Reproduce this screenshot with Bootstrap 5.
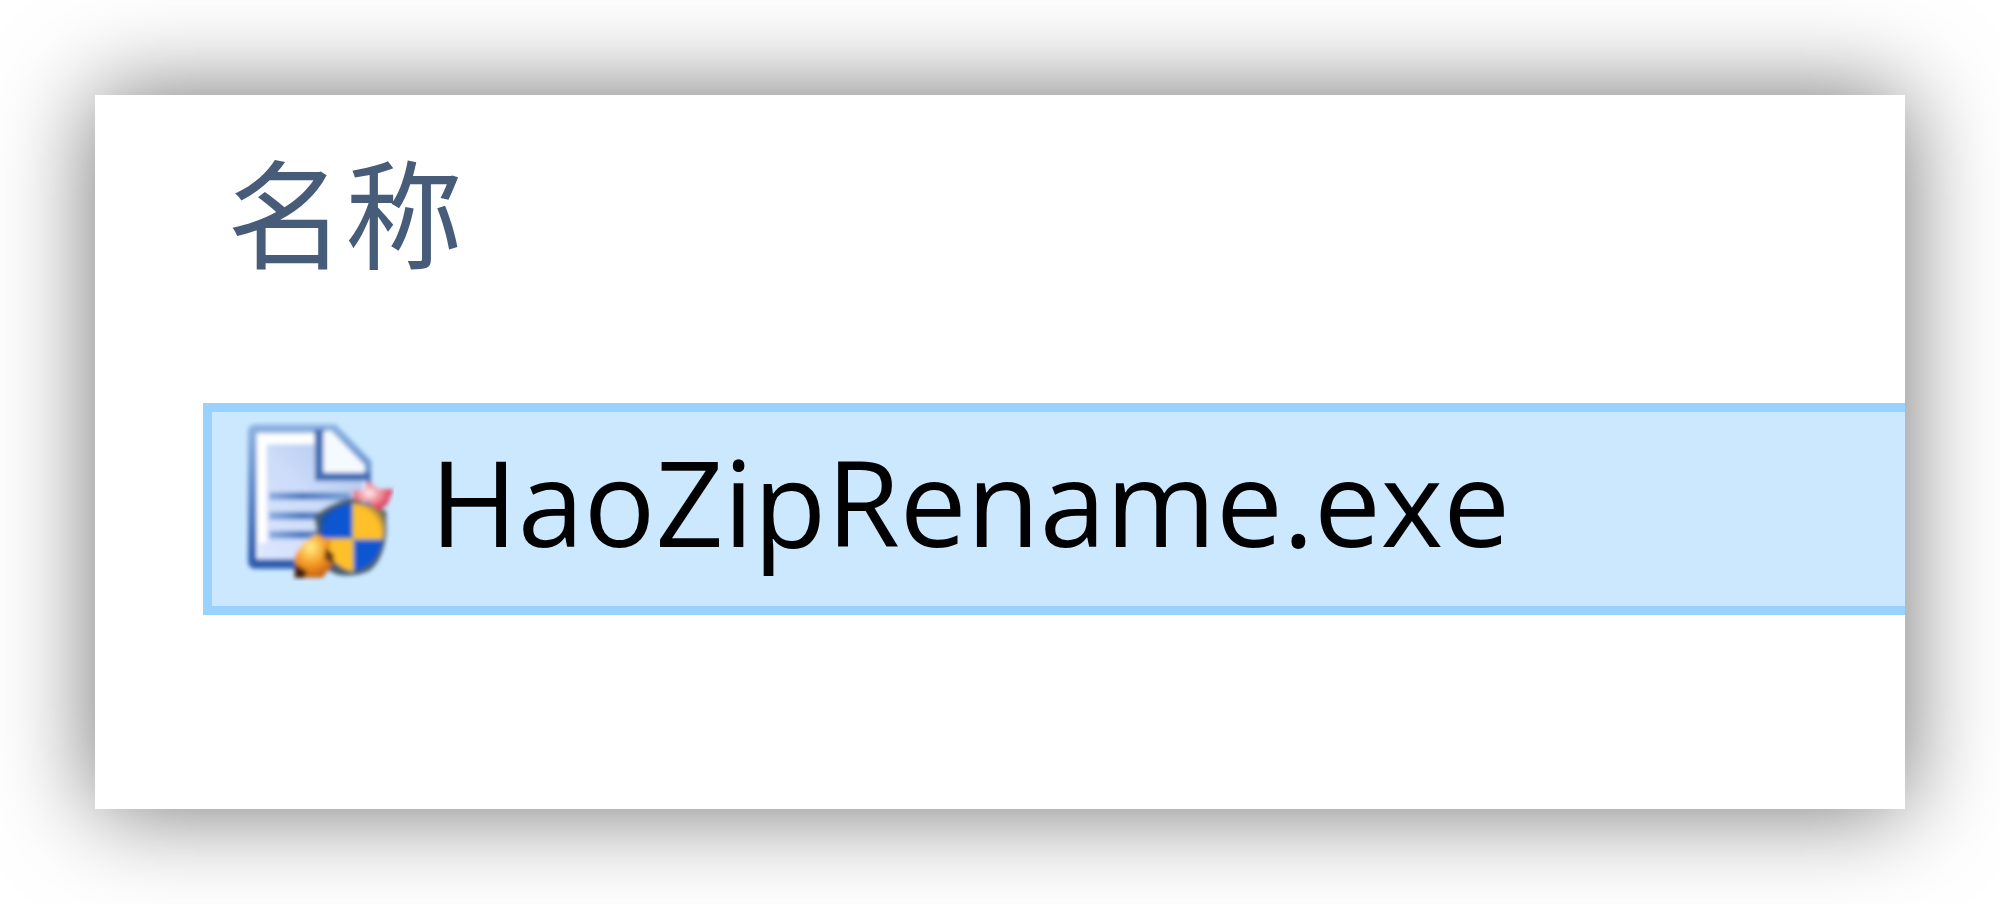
<!DOCTYPE html>
<html lang="zh-CN">
<head>
<meta charset="utf-8">
<meta name="viewport" content="width=device-width, initial-scale=1">
<title>HaoZipRename.exe</title>
<link href="https://cdn.jsdelivr.net/npm/bootstrap@5.3.0/dist/css/bootstrap.min.css" rel="stylesheet">
<style>
  body { background: #fff; padding: 95px; font-family: "Open Sans", "Noto Sans CJK SC", sans-serif; }
  .file-panel { padding: 44px 0 194px 108px; box-shadow: 0 0 92px rgba(0, 0, 0, .56); }
  .column-title { margin: 0 0 124px 24px; font: 400 118px/140px "Noto Sans CJK SC", sans-serif; color: #465c78; }
  .file-row { gap: 36px; padding: 8px 32px 24px; background: #cce8ff; border: 9px solid #99d1ff; border-right: 0; color: #000; font-size: 119px; line-height: 162px; }
  .file-row:hover { color: #000; }
  .file-icon { width: 150px; height: 160px; }
</style>
</head>
<body>
<main class="file-panel bg-white">
  <h1 class="column-title">名称</h1>
  <a href="#" class="file-row d-flex align-items-center text-decoration-none text-nowrap">
    <svg class="file-icon flex-shrink-0" viewBox="170 75 450 480" aria-hidden="true">
      <defs>
        <linearGradient id="edge" x1="0" y1="0" x2="0" y2="1"><stop offset="0" stop-color="#8fb3e2"/><stop offset="1" stop-color="#2c5cae"/></linearGradient>
        <linearGradient id="paper" x1="1" y1="0" x2="0" y2="1"><stop offset="0" stop-color="#a9c5ec"/><stop offset=".5" stop-color="#cddcf9"/><stop offset="1" stop-color="#dce6ff"/></linearGradient>
        <linearGradient id="rule" x1="0" x2="1"><stop offset="0" stop-color="#8fafe0"/><stop offset=".4" stop-color="#4d7cc2"/><stop offset="1" stop-color="#7da2d8"/></linearGradient>
        <radialGradient id="ball" cx=".4" cy=".3" r=".7"><stop offset="0" stop-color="#fff08c"/><stop offset=".5" stop-color="#f9a52c"/><stop offset="1" stop-color="#c95f10"/></radialGradient>
        <radialGradient id="tip" cx=".4" cy=".4" r=".55"><stop offset="0" stop-color="#fff0f2"/><stop offset=".4" stop-color="#f5a3ae"/><stop offset="1" stop-color="#dc3a54"/></radialGradient>
        <radialGradient id="shade" cx=".5" cy=".5" r=".52"><stop offset=".72" stop-color="#243c50" stop-opacity="0"/><stop offset="1" stop-color="#243c50" stop-opacity=".8"/></radialGradient>
        <clipPath id="shield"><path d="M400 365Q435 328 495 320Q555 325 590 350V400Q586 465 555 497Q530 520 495 528Q450 515 420 470Q398 435 400 365Z"/></clipPath>
        <filter id="soft" x="-5%" y="-5%" width="110%" height="110%"><feGaussianBlur stdDeviation="6"/></filter>
      </defs>
      <g filter="url(#soft)">
        <path d="M205 85H445L552 195V518H205Q182 518 182 495V108Q182 85 205 85Z" fill="url(#edge)"/>
        <path d="M208 112H390V250H535V488H208Z" fill="#fff"/>
        <path d="M238 145H380V255H528V488H215V440H238Z" fill="url(#paper)"/>
        <path d="M382 100H410V228H548V255H382Z" fill="#416fb8"/>
        <path d="M408 106H432L532 208V230H408Z" fill="#f5fafe"/>
        <path d="M245 289H490V312H245ZM245 347H440V371H245ZM245 404H420V428H245Z" fill="url(#rule)"/>
        <path d="M380 360Q430 318 495 306L597 345V410Q588 495 545 525Q500 545 450 536L405 515Z" fill="#4a5f70"/>
        <g clip-path="url(#shield)">
          <path d="M380 300H497V429H380ZM497 429H600V540H497Z" fill="#0757d2"/>
          <path d="M497 300H600V429H497ZM380 429H497V540H380Z" fill="#ffc02c"/>
          <path d="M380 300H610V550H380Z" fill="url(#shade)"/>
          <path d="M497 310V530M390 429H595" stroke="#b9b45c" stroke-width="6"/>
        </g>
        <path d="M498 282L530 284L542 256L575 280H618L600 325L572 346L545 318L498 312Z" fill="url(#tip)"/>
        <path d="M325 545L322 478L345 445L385 415L430 435L425 480L440 500L405 545Z" fill="url(#ball)"/>
        <path d="M322 505L358 525L352 546H322Z" fill="#44220c"/>
        <path d="M415 455L440 475V505L410 488Z" fill="#704019"/>
      </g>
    </svg>
    <span>HaoZipRename.exe</span>
  </a>
</main>
<script src="https://cdn.jsdelivr.net/npm/bootstrap@5.3.0/dist/js/bootstrap.bundle.min.js"></script>
</body>
</html>
